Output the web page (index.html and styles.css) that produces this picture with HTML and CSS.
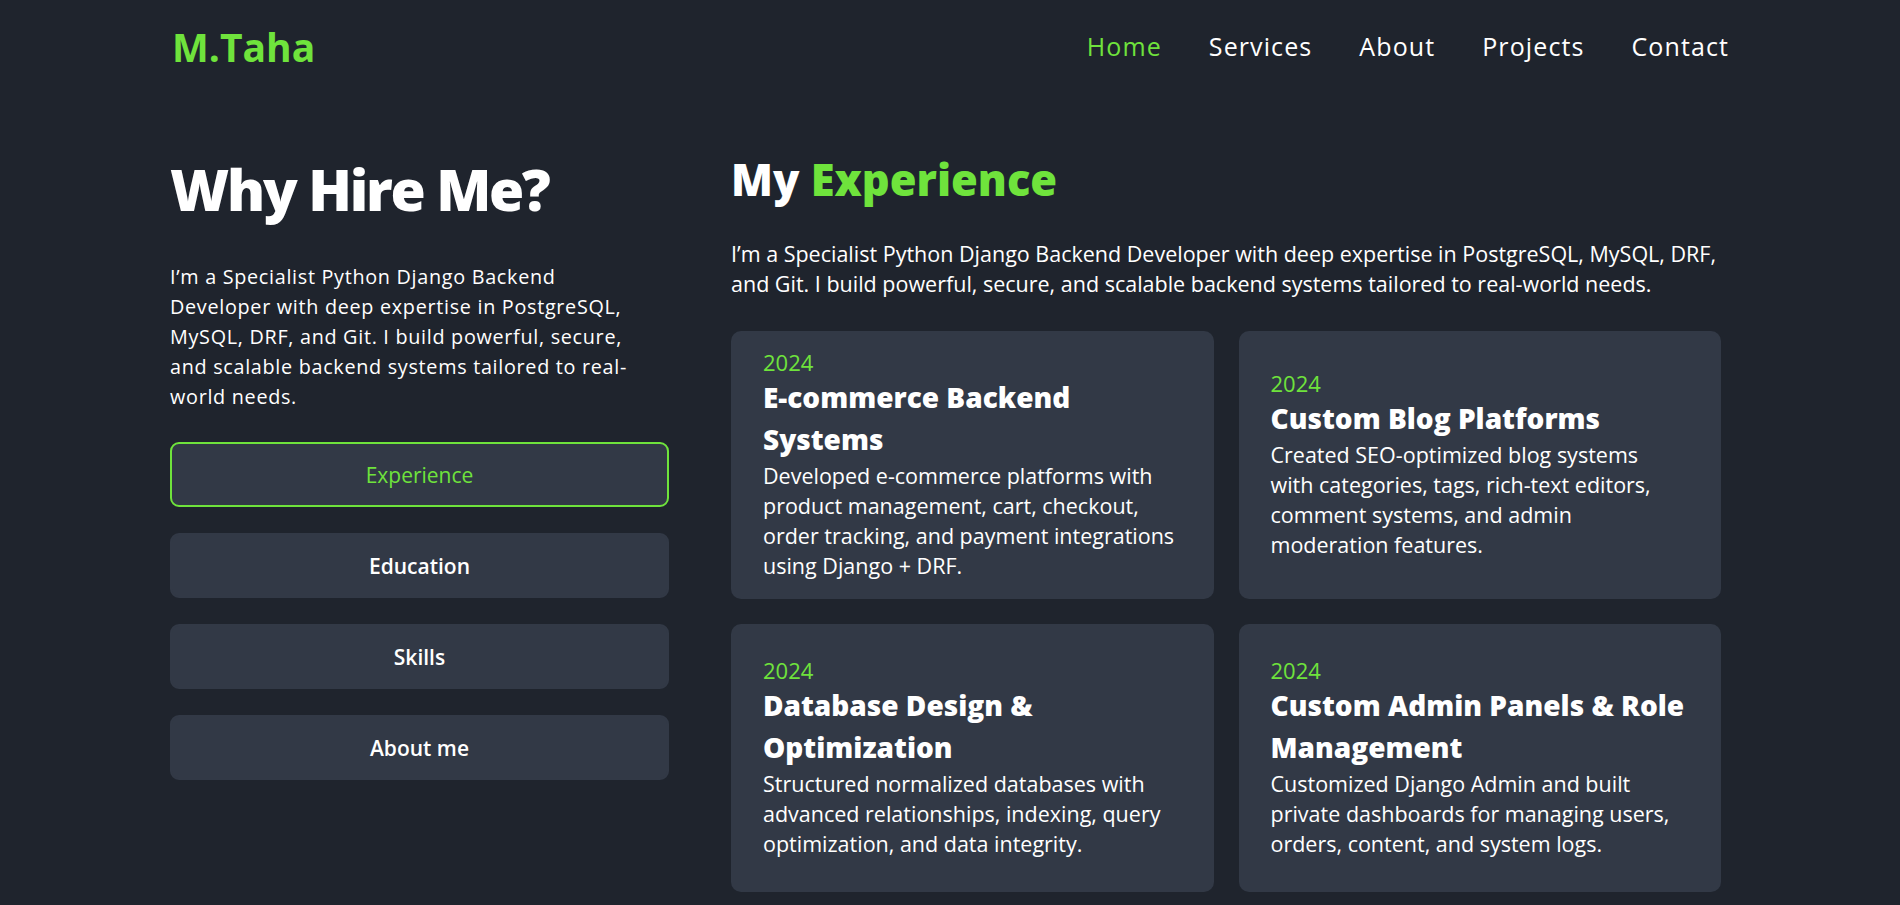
FILE: index.html
```html
<!DOCTYPE html>
<html lang="en">
<head>
<meta charset="utf-8">
<title>M.Taha – Why Hire Me</title>
<link rel="stylesheet" href="styles.css">
</head>
<body>
<header class="header">
  <a class="logo" href="#">M.Taha</a>
  <nav class="nav">
    <a class="nav-link active" href="#">Home</a>
    <a class="nav-link" href="#">Services</a>
    <a class="nav-link" href="#">About</a>
    <a class="nav-link" href="#">Projects</a>
    <a class="nav-link" href="#">Contact</a>
  </nav>
</header>

<main class="resume">
  <section class="resume-side">
    <h2 class="side-title">Why Hire Me?</h2>
    <p class="side-text">I’m a Specialist Python Django Backend Developer with deep expertise in PostgreSQL, MySQL, DRF, and Git. I build powerful, secure, and scalable backend systems tailored to real-world needs.</p>
    <div class="tabs">
      <button class="tab active">Experience</button>
      <button class="tab">Education</button>
      <button class="tab">Skills</button>
      <button class="tab">About me</button>
    </div>
  </section>

  <section class="resume-main">
    <h2 class="main-title">My <span class="accent">Experience</span></h2>
    <p class="main-text">I’m a Specialist Python Django Backend Developer with deep expertise in PostgreSQL, MySQL, DRF, and Git. I build powerful, secure, and scalable backend systems tailored to real-world needs.</p>
    <div class="cards">
      <article class="card">
        <span class="year">2024</span>
        <h3 class="card-title">E-commerce Backend Systems</h3>
        <p class="card-text">Developed e-commerce platforms with product management, cart, checkout, order tracking, and payment integrations using Django + DRF.</p>
      </article>
      <article class="card">
        <span class="year">2024</span>
        <h3 class="card-title">Custom Blog Platforms</h3>
        <p class="card-text">Created SEO-optimized blog systems with categories, tags, rich-text editors, comment systems, and admin moderation features.</p>
      </article>
      <article class="card">
        <span class="year">2024</span>
        <h3 class="card-title">Database Design &amp; Optimization</h3>
        <p class="card-text">Structured normalized databases with advanced relationships, indexing, query optimization, and data integrity.</p>
      </article>
      <article class="card">
        <span class="year">2024</span>
        <h3 class="card-title">Custom Admin Panels &amp; Role Management</h3>
        <p class="card-text">Customized Django Admin and built private dashboards for managing users, orders, content, and system logs.</p>
      </article>
    </div>
  </section>
</main>
</body>
</html>
```

FILE: styles.css
```css
* {
  box-sizing: border-box;
  margin: 0;
  padding: 0;
}

html, body {
  height: 100%;
}

body {
  background: #1f242d;
  color: #ffffff;
  font-family: "Open Sans", "Noto Sans", sans-serif;
  overflow: hidden;
}

a {
  text-decoration: none;
  color: inherit;
}

.header {
  height: 92px;
  padding: 0 171px 0 172px;
  display: flex;
  align-items: center;
  justify-content: space-between;
}

.logo {
  font-size: 39px;
  font-weight: 700;
  line-height: 1;
  color: #6fe33c;
}

.nav {
  display: flex;
  gap: 47px;
}

.nav-link {
  font-size: 25px;
  font-weight: 500;
  line-height: 1;
  letter-spacing: 1.1px;
  color: #ffffff;
}

.nav-link.active {
  color: #6fe33c;
  font-weight: 400;
}

.resume {
  display: flex;
  gap: 62px;
  padding: 63px 0 0 170px;
}

.resume-side {
  width: 499px;
  flex: none;
}

.side-title {
  font-size: 57px;
  font-weight: 800;
  line-height: 1.2;
  letter-spacing: -2.2px;
}

.side-text {
  margin-top: 39px;
  font-size: 19.8px;
  line-height: 30px;
  letter-spacing: 0.7px;
  width: 488px;
}

.tabs {
  margin-top: 30px;
  display: flex;
  flex-direction: column;
  gap: 26px;
}

.tab {
  height: 65px;
  border: 2px solid #323946;
  border-radius: 9px;
  background: #323946;
  color: #ffffff;
  font-family: inherit;
  font-size: 21px;
  font-weight: 600;
}

.tab.active {
  border-color: #6fe33c;
  color: #6fe33c;
  font-weight: 500;
}

.resume-main {
  width: 990px;
  flex: none;
}

.main-title {
  font-size: 43.4px;
  font-weight: 800;
  line-height: 1.2;
  margin-top: -1px;
}

.accent {
  color: #6fe33c;
}

.main-text {
  margin-top: 32.5px;
  font-size: 21.5px;
  line-height: 30px;
}

.cards {
  margin-top: 32.5px;
  display: grid;
  grid-template-columns: 1fr 1fr;
  grid-auto-rows: 1fr;
  gap: 25px;
}

.card {
  background: #323946;
  border-radius: 10px;
  padding: 18px 32px;
  display: flex;
  flex-direction: column;
  justify-content: center;
}

.year {
  font-size: 22px;
  line-height: 27px;
  color: #6fe33c;
}

.card-title {
  font-size: 28px;
  font-weight: 800;
  line-height: 42px;
}

.card-text {
  margin-top: 1px;
  font-size: 21.5px;
  line-height: 30px;
  max-width: 412px;
}
```
